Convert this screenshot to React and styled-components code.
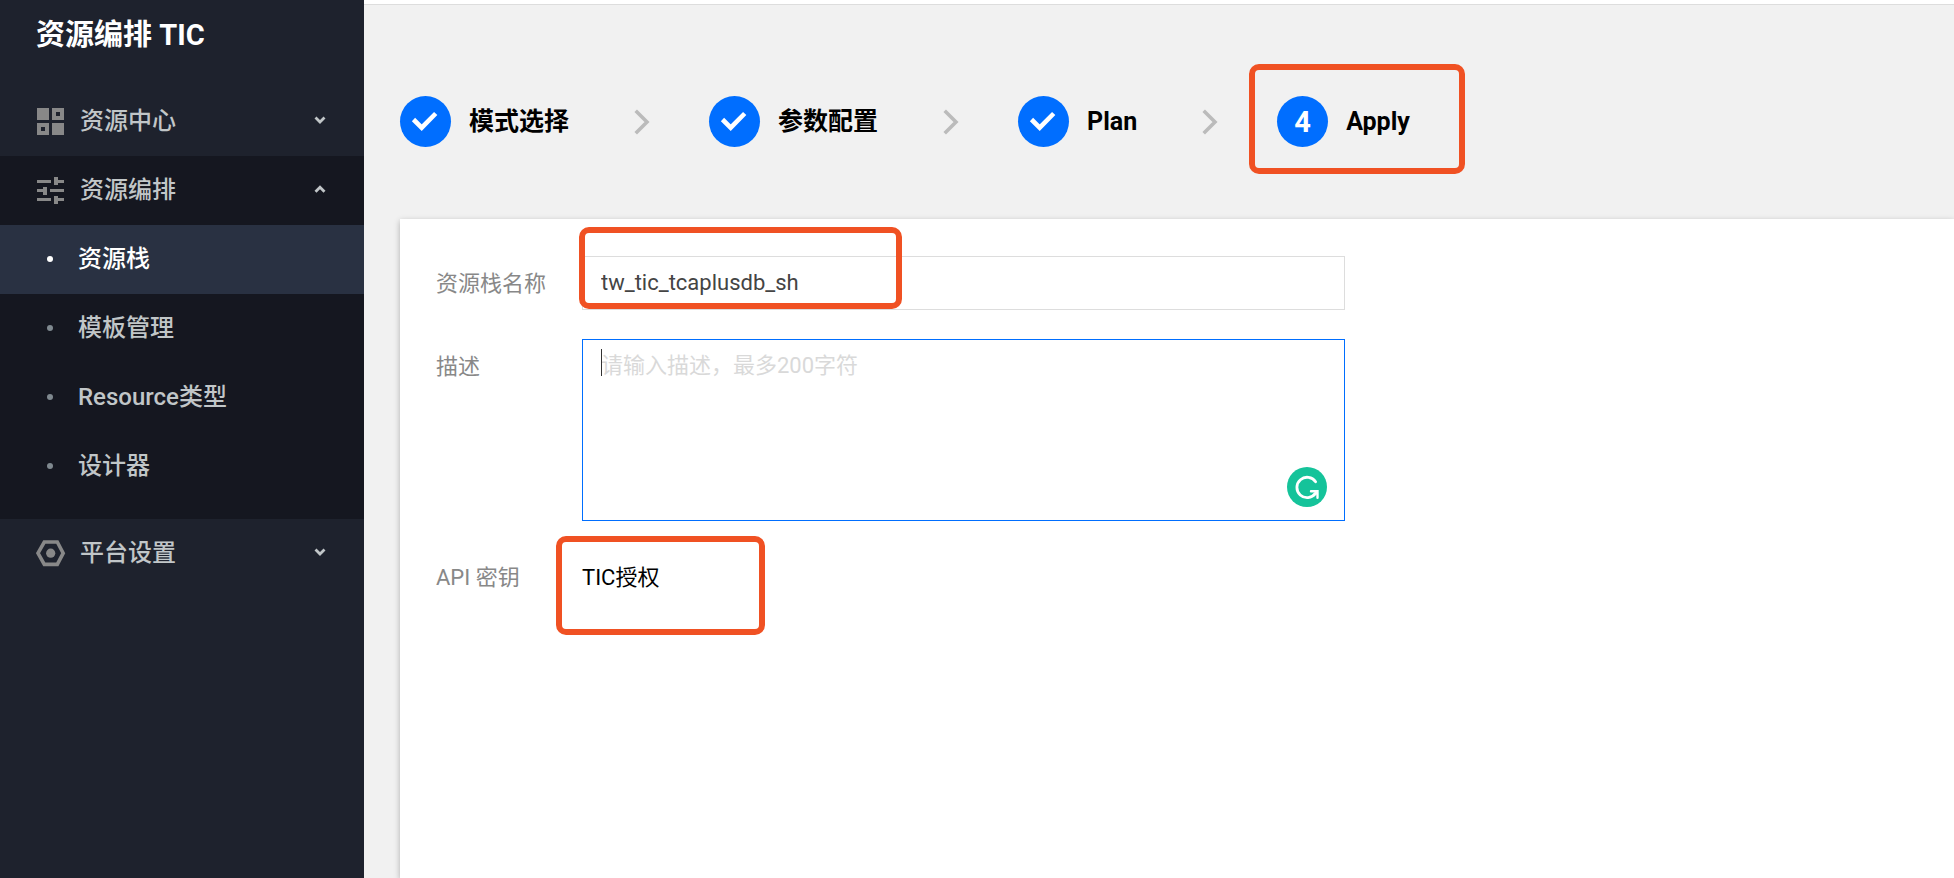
import React, { useState } from "react";
import styled, { createGlobalStyle } from "styled-components";

const GlobalStyle = createGlobalStyle`
  *, *::before, *::after { box-sizing: border-box; }
  body {
    margin: 0;
    background: #f1f1f1;
    font-family: Roboto, "Noto Sans CJK SC", sans-serif;
    font-size: 22px;
    line-height: 32px;
    color: #000;
  }
  button, input, textarea { font: inherit; }
`;

const Page = styled.div`
  display: flex;
  min-height: 100vh;
`;

const Sidebar = styled.aside`
  flex: 0 0 364px;
  background: #1e222d;
  color: #c1c6c8;
`;

const Brand = styled.h1`
  margin: 0;
  padding: 0 36px;
  height: 87px;
  line-height: 70px;
  font-size: 29px;
  font-weight: 700;
  color: #fff;
`;

const Group = styled.section`
  background: ${(p) => (p.$open ? "#151720" : "transparent")};
  padding-bottom: ${(p) => (p.$open ? "18px" : "0")};
`;

const GroupButton = styled.button`
  display: flex;
  align-items: center;
  gap: 14px;
  width: 100%;
  height: 69px;
  padding: 0 38px 2px 36px;
  border: 0;
  background: none;
  color: inherit;
  font-size: 24px;
  font-weight: 500;
  text-align: left;
  cursor: pointer;
`;

const GroupLabel = styled.span`
  flex: 1;
`;

const SubList = styled.ul`
  list-style: none;
  margin: 0;
  padding: 0;
`;

const SubLink = styled.a`
  display: flex;
  align-items: center;
  gap: 25px;
  height: 69px;
  padding: 0 0 2px 47px;
  font-size: 24px;
  font-weight: 500;
  text-decoration: none;
  color: ${(p) => (p.$active ? "#fff" : "#c1c6c8")};
  background: ${(p) => (p.$active ? "#293142" : "transparent")};

  &::before {
    content: "";
    width: 6px;
    height: 6px;
    border-radius: 50%;
    background: ${(p) => (p.$active ? "#fff" : "#7f898f")};
  }
`;

const Main = styled.main`
  flex: 1;
  min-width: 0;
  display: flex;
  flex-direction: column;
`;

const TopEdge = styled.div`
  height: 5px;
  background: #fff;
  border-bottom: 1px solid #ddd;
`;

const Steps = styled.ol`
  display: flex;
  align-items: center;
  list-style: none;
  margin: 0;
  padding: 91px 36px 72px;
`;

const Step = styled.li`
  position: relative;
  display: flex;
  align-items: center;
  gap: 18px;
  font-size: 25px;
  font-weight: 700;
  white-space: nowrap;
`;

const StepBadge = styled.span`
  display: flex;
  align-items: center;
  justify-content: center;
  width: 51px;
  height: 51px;
  border-radius: 50%;
  background: #006eff;
  color: #fff;
  font-size: 29px;
`;

const StepArrow = styled.li`
  margin: 0 59px 0 65px;

  svg { display: block; }
`;

const Panel = styled.section`
  flex: 1;
  margin-left: 36px;
  padding: 37px 36px;
  background: #fff;
  box-shadow: 0 2px 6px rgba(0, 0, 0, 0.28);
`;

const Form = styled.form`
  display: flex;
  flex-direction: column;
  gap: 29px;
`;

const Field = styled.div`
  display: grid;
  grid-template-columns: 146px minmax(0, 763px);
  align-items: start;
`;

const FieldLabel = styled.label`
  line-height: 56px;
  height: 54px;
  color: #888;
`;

const Control = styled.div`
  position: relative;
  display: flex;
`;

const TextInput = styled.input`
  width: 100%;
  height: 54px;
  padding: 0 18px 2px;
  border: 1px solid #ddd;
  border-radius: 0;
  outline: none;
  color: #444;
`;

const TextArea = styled.textarea`
  width: 100%;
  height: 182px;
  padding: 10px 18px;
  border: 1px solid #006eff;
  border-radius: 0;
  outline: none;
  resize: none;
  color: #444;
  caret-color: transparent;

  &::placeholder { color: #d9d9d9; opacity: 1; }
`;

const Caret = styled.span`
  position: absolute;
  left: 19px;
  top: 10px;
  width: 1px;
  height: 27px;
  background: #333;
`;

const AssistantButton = styled.button`
  position: absolute;
  right: 18px;
  bottom: 14px;
  width: 40px;
  height: 40px;
  padding: 0;
  border: 0;
  border-radius: 50%;
  background: #15c39a;
  cursor: pointer;

  svg { display: block; }
`;

const StaticValue = styled.output`
  line-height: 56px;
  height: 54px;
`;

const Highlight = styled.span`
  position: absolute;
  left: ${(p) => p.$left}px;
  top: ${(p) => p.$top}px;
  width: ${(p) => p.$width}px;
  height: ${(p) => p.$height}px;
  border: 6px solid #f05123;
  border-radius: 10px;
  pointer-events: none;
`;

function GridIcon() {
  return (
    <svg width="30" height="30" viewBox="0 0 30 30" fill="#888" fillRule="evenodd" aria-hidden="true">
      <path d="M1 2h12v12H1zM16 2h12v12H16zM20 6v4h4V6zM1 17h12v12H1zM5 21v4h4v-4zM16 17h12v12H16z" />
    </svg>
  );
}

function SlidersIcon() {
  return (
    <svg width="30" height="30" viewBox="0 0 30 30" fill="#888" aria-hidden="true">
      <path d="M1 5h14v3H1zM18 2h4v3h6v3h-6v2h-4zM1 14h6v-2h4v8H7v-3H1zM14 14h14v3H14zM1 23h14v3H1zM18 21h4v2h6v3h-6v3h-4z" />
    </svg>
  );
}

function HexIcon() {
  return (
    <svg width="30" height="30" viewBox="0 0 30 30" aria-hidden="true">
      <path d="M8.300 4h13L27.200 15.200 21.300 26.400h-13L2 15.200z" fill="none" stroke="#888" strokeWidth="3.600" />
      <circle cx="14.700" cy="15.200" r="4.600" fill="#888" />
    </svg>
  );
}

function Caretlet({ up }) {
  return (
    <svg width="12" height="12" viewBox="0 0 12 12" fill="none" stroke="#c1c6c8" strokeWidth="2.800" aria-hidden="true">
      <path d={up ? "M1.500 7.700L6 3.200l4.500 4.500" : "M1.500 2.500L6 7l4.500-4.500"} />
    </svg>
  );
}

function CheckMark() {
  return (
    <svg width="51" height="51" viewBox="0 0 51 51" fill="none" stroke="#fff" strokeWidth="4.600" aria-hidden="true">
      <path d="M13.500 23.500l8.200 8.200L35.700 17.500" />
    </svg>
  );
}

const groups = [
  { label: "资源中心", Icon: GridIcon },
  {
    label: "资源编排",
    Icon: SlidersIcon,
    open: true,
    items: ["资源栈", "模板管理", "Resource类型", "设计器"],
  },
  { label: "平台设置", Icon: HexIcon },
];

const steps = ["模式选择", "参数配置", "Plan", "Apply"];
const currentStep = 3;

export default function App() {
  const [name, setName] = useState("tw_tic_tcaplusdb_sh");
  const [description, setDescription] = useState("");

  return (
    <>
      <GlobalStyle />
      <Page>
        <Sidebar>
          <Brand>资源编排 TIC</Brand>
          <nav>
            {groups.map(({ label, Icon, open, items }) => (
              <Group key={label} $open={open}>
                <GroupButton type="button" aria-expanded={Boolean(open)}>
                  <Icon />
                  <GroupLabel>{label}</GroupLabel>
                  <Caretlet up={open} />
                </GroupButton>
                {items && (
                  <SubList>
                    {items.map((item, i) => (
                      <li key={item}>
                        <SubLink href="#" $active={i === 0}>{item}</SubLink>
                      </li>
                    ))}
                  </SubList>
                )}
              </Group>
            ))}
          </nav>
        </Sidebar>
        <Main>
          <TopEdge />
          <Steps>
            {steps.map((step, i) => (
              <React.Fragment key={step}>
                {i > 0 && (
                  <StepArrow aria-hidden="true">
                    <svg width="16" height="26" viewBox="0 0 16 26" fill="none" stroke="#bbb" strokeWidth="3.600">
                      <path d="M1.700 1.700L13 13 1.700 24.300" />
                    </svg>
                  </StepArrow>
                )}
                <Step aria-current={i === currentStep ? "step" : undefined}>
                  <StepBadge>{i < currentStep ? <CheckMark /> : i + 1}</StepBadge>
                  {step}
                  {i === currentStep && <Highlight $left={-28} $top={-32} $width={216} $height={110} />}
                </Step>
              </React.Fragment>
            ))}
          </Steps>
          <Panel>
            <Form>
              <Field>
                <FieldLabel htmlFor="stack-name">资源栈名称</FieldLabel>
                <Control>
                  <TextInput id="stack-name" value={name} onChange={(e) => setName(e.target.value)} />
                  <Highlight $left={-3} $top={-29} $width={323} $height={82} />
                </Control>
              </Field>
              <Field>
                <FieldLabel htmlFor="stack-description">描述</FieldLabel>
                <Control>
                  <TextArea
                    id="stack-description"
                    placeholder="请输入描述，最多200字符"
                    value={description}
                    onChange={(e) => setDescription(e.target.value)}
                  />
                  <Caret />
                  <AssistantButton type="button" aria-label="Grammarly">
                    <svg width="40" height="40" viewBox="0 0 40 40" fill="none" stroke="#fff" strokeLinecap="round" aria-hidden="true">
                      <path d="M28.600 14.800A10.200 10.200 0 1 0 28.400 26.400" strokeWidth="2.800" />
                      <path d="M24 24.300h6.500v6.500M30 25l-3 3" strokeWidth="2.400" />
                    </svg>
                  </AssistantButton>
                </Control>
              </Field>
              <Field>
                <FieldLabel htmlFor="api-key">API 密钥</FieldLabel>
                <Control>
                  <StaticValue id="api-key">TIC授权</StaticValue>
                  <Highlight $left={-26} $top={-14} $width={209} $height={99} />
                </Control>
              </Field>
            </Form>
          </Panel>
        </Main>
      </Page>
    </>
  );
}
